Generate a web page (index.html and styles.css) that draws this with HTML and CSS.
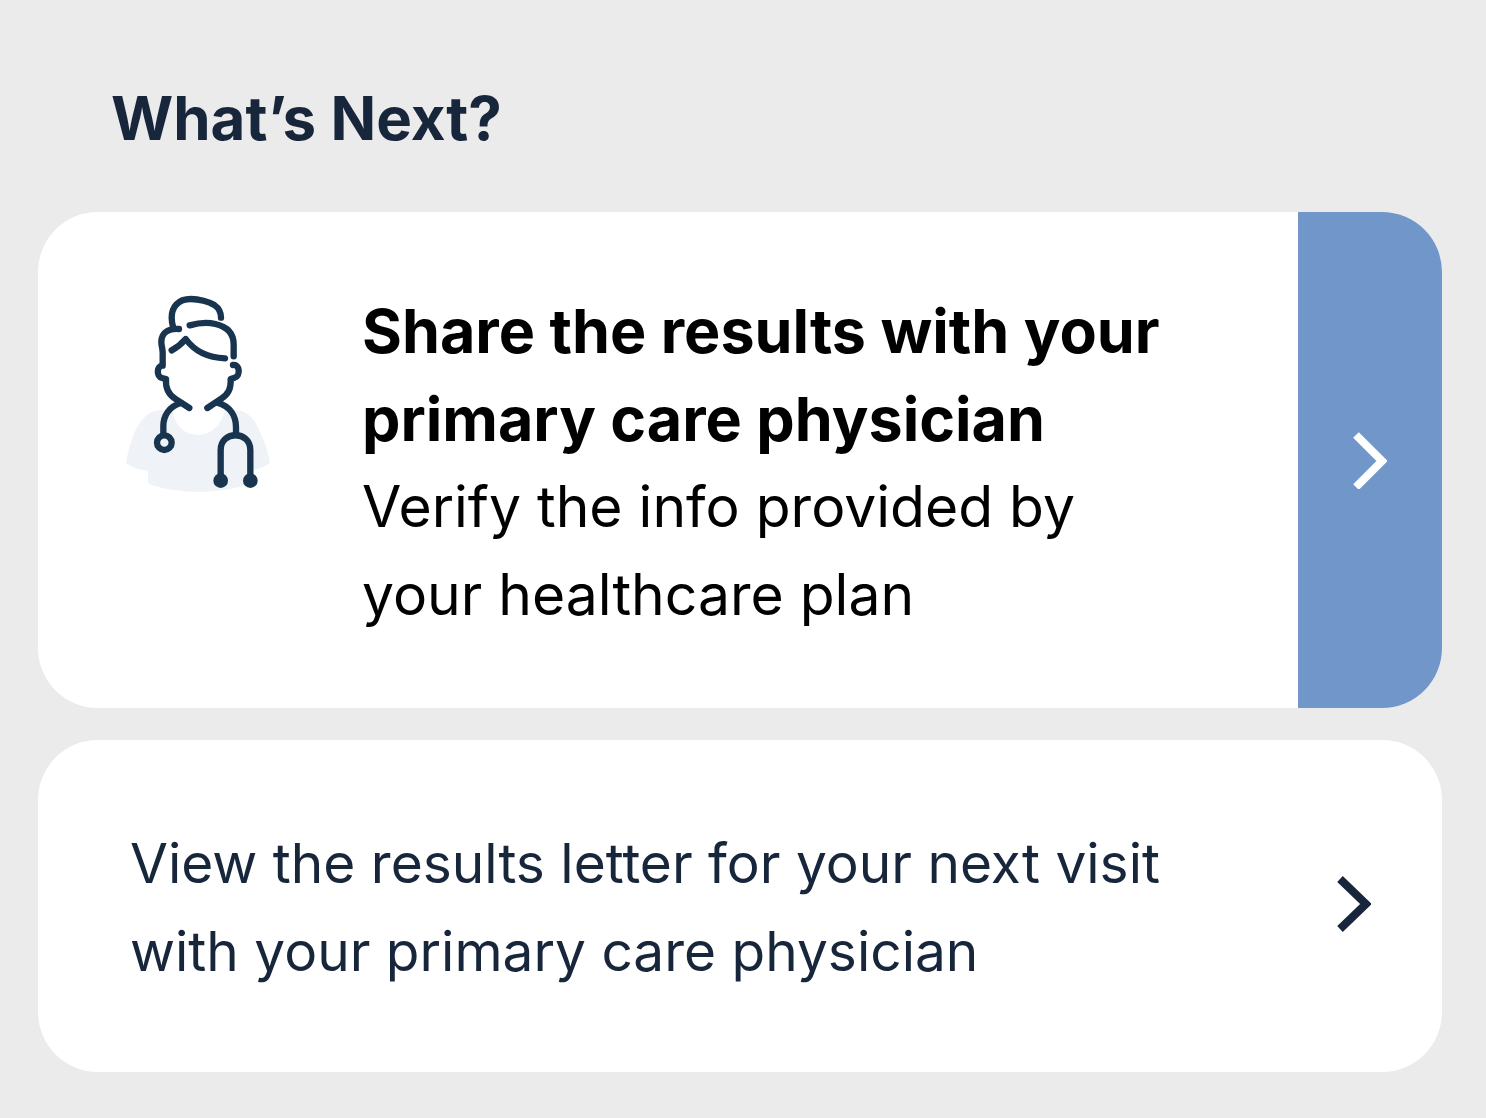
FILE: index.html
```html
<!DOCTYPE html>
<html lang="en">

<head>
    <meta charset="UTF-8" />
    <meta name="viewport" content="width=device-width, initial-scale=1.0" />
    <title>What’s Next?</title>
    <link rel="stylesheet" href="styles.css">
</head>

<body>
    <main class="next-steps">
        <h1>What’s Next?</h1>

        <a class="card card-primary" href="#share">
            <svg class="physician" viewBox="48 42 432 594" aria-hidden="true">
                <path class="coat" d="M150 390C100 393 77 447 66 477C56 506 50 533 48 550C65 563 90 571 114 573V601C114 611 119 615 130 617C215 642 318 641 400 617Q415 612 415 573C441 570 466 561 480 548C475 520 466 488 451 458C436 424 419 390 370 390L344 389C336 435 304 464 264 464C224 464 195 438 186 389Z" />
                <g class="outline">
                    <path d="M333 113C333 94 326 84 313 75C297 65 266 57 243 57C203 57 185 82 185 113C185 124 187 133 190 144" />
                    <path d="M207 147C178 145 155 155 154 185C154 198 158 205 158 218V257C140 256 138 290 156 294L168 297C166 325 174 342 195 356L238 384" />
                    <path d="M239 136C264 129 292 126 316 132C351 140 371 158 371 193V229" />
                    <path d="M185 211C204 201 216 190 227 177C251 210 289 233 345 235" />
                    <path d="M369 255C391 252 391 289 374 293L362 297C363 327 355 342 334 356L292 384" />
                    <path d="M213 369C177 379 160 408 160 438V463" />
                    <path d="M321 368C362 379 378 410 378 441V464" />
                    <path d="M332 600V510C332 451 421 451 421 510V600" />
                    <circle cx="163" cy="488" r="22" />
                </g>
                <circle class="tip" cx="332" cy="602" r="22" />
                <circle class="tip" cx="421" cy="602" r="22" />
            </svg>
            <span class="text">
                <strong>Share the results with your primary care physician</strong>
                <span class="detail">Verify the info provided by your healthcare plan</span>
            </span>
            <span class="arrow">
                <svg class="chevron" viewBox="0 0 34 58" aria-hidden="true">
                    <path d="M3 4L29 30L3 56" />
                </svg>
            </span>
        </a>

        <a class="card card-secondary" href="#letter">
            <span class="text">View the results letter for your next visit with your primary care physician</span>
            <svg class="chevron" viewBox="0 0 34 58" aria-hidden="true">
                <path d="M3 4L29 29L3 54" />
            </svg>
        </a>
    </main>
</body>

</html>
```

FILE: styles.css
```css
* {
    box-sizing: border-box;
}

body {
    margin: 0;
    background: #ebebeb;
    color: #18263b;
    font-family: Inter, "Liberation Sans", sans-serif;
    line-height: 88px;
}

.next-steps {
    display: flex;
    flex-direction: column;
    gap: 32px;
    padding: 74px 44px 46px 38px;
}

h1 {
    margin: 0 0 18px;
    padding-left: 73px;
    font-size: 60px;
    font-weight: 700;
}

.card {
    display: flex;
    background: #fff;
    border-radius: 60px;
    overflow: hidden;
    text-decoration: none;
}

.card .text {
    flex: 1;
}

.card-primary {
    color: #000;
}

.card-primary .text {
    padding: 75px 100px 69px 92px;
}

.card-primary strong,
.card-primary .detail {
    display: block;
}

.card-primary strong {
    font-size: 61px;
}

.card-primary .detail {
    font-size: 57px;
}

.card-secondary {
    align-items: center;
    padding: 73px 71px 77px 92px;
    color: #18263b;
    font-size: 55px;
}

.card-secondary .text {
    padding: 6px 160px 0 0;
}

.physician {
    flex: none;
    width: 144px;
    height: 198px;
    margin: 82px 0 0 88px;
}

.coat {
    fill: #eff3f8;
}

.outline {
    fill: none;
    stroke: #18344e;
    stroke-width: 19;
    stroke-linecap: round;
    stroke-linejoin: round;
}

.tip {
    fill: #18344e;
}

.arrow {
    display: flex;
    flex: none;
    align-items: center;
    justify-content: center;
    width: 144px;
    background: #7196c9;
    color: #fff;
}

.chevron {
    flex: none;
    width: 34px;
    height: 58px;
    fill: none;
    stroke: currentColor;
    stroke-width: 8;
}
```
